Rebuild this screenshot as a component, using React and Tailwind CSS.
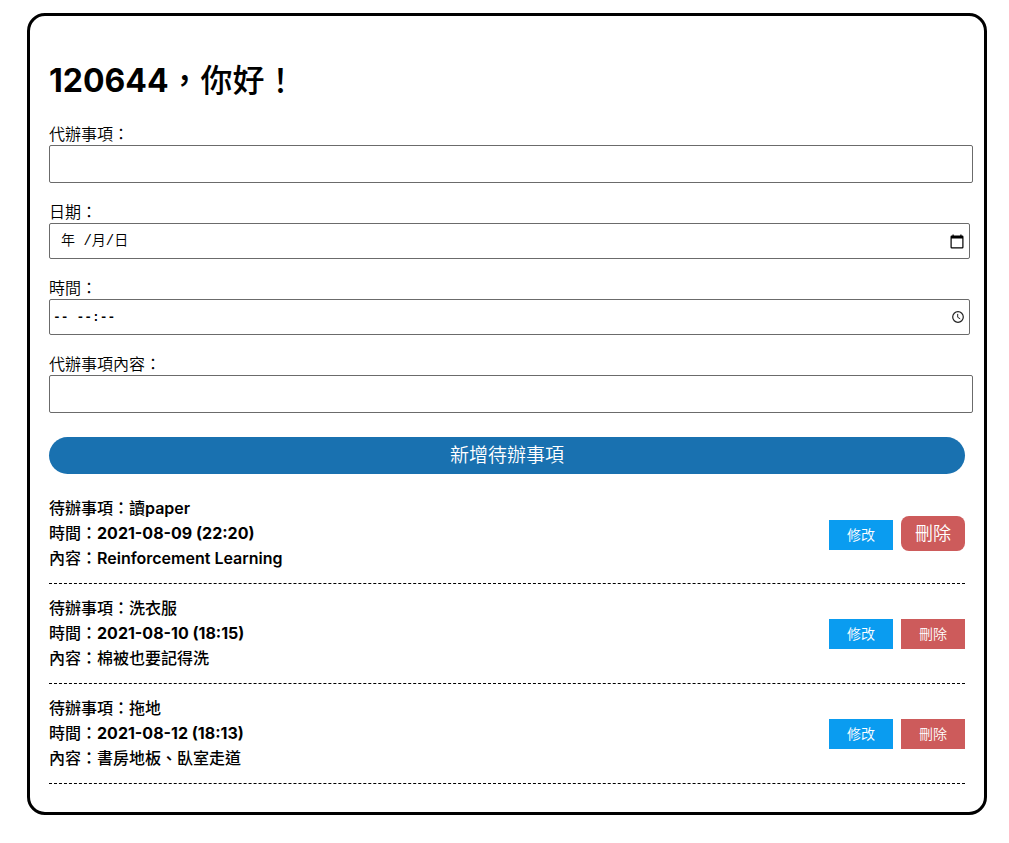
import { useState } from "react";

const initialTodos = [
  { id: 1, title: "讀paper", date: "2021-08-09", time: "22:20", content: "Reinforcement Learning" },
  { id: 2, title: "洗衣服", date: "2021-08-10", time: "18:15", content: "棉被也要記得洗" },
  { id: 3, title: "拖地", date: "2021-08-12", time: "18:13", content: "書房地板、臥室走道" },
];

const inputClass = "block rounded-[2px] border border-[#6b6b6b] bg-white";

function CalendarIcon() {
  return (
    <svg viewBox="0 0 14 15" className="h-[15px] w-[14px]" aria-hidden="true">
      <path
        fill="#000"
        fillRule="evenodd"
        d="M2.5 0.5h1.2v1h6.6v-1h1.2v1h0.7a1.3 1.3 0 0 1 1.3 1.3v10.4a1.3 1.3 0 0 1-1.3 1.3H1.8a1.3 1.3 0 0 1-1.3-1.3V2.8a1.3 1.3 0 0 1 1.3-1.3h0.7zM1.7 4.6v8.7h10.6V4.6z"
      />
    </svg>
  );
}

function ClockIcon() {
  return (
    <svg viewBox="0 0 12 12" className="h-3 w-3" fill="none" stroke="#222" aria-hidden="true">
      <circle cx="6" cy="6" r="5.3" strokeWidth="1.2" />
      <path d="M5.7 2.9v3.4l2.5 1.5" strokeWidth="1" />
    </svg>
  );
}

// Latin runs are set heavier than the Chinese text around them.
function MixedText({ text }) {
  return text.split(/([ -~]+)/).map((part, i) =>
    i % 2 === 1 ? (
      <span key={i} className="font-semibold">
        {part}
      </span>
    ) : (
      part
    )
  );
}

function Field({ id, label, children }) {
  return (
    <div>
      <label htmlFor={id} className="block leading-[22px]">
        {label}
      </label>
      {children}
    </div>
  );
}

function TodoItem({ todo, large, onDelete }) {
  return (
    <li className="flex items-center justify-between border-b border-dashed border-black py-3">
      <div className="font-medium leading-[25px]">
        <p>
          待辦事項：
          <MixedText text={todo.title} />
        </p>
        <p>
          時間：
          <span className="font-bold">
            {todo.date} ({todo.time})
          </span>
        </p>
        <p>
          內容：
          <MixedText text={todo.content} />
        </p>
      </div>
      <div className="flex items-baseline gap-2 text-white">
        <button type="button" className="h-[30px] w-16 bg-[#0a9cf0] text-sm">
          修改
        </button>
        <button
          type="button"
          onClick={onDelete}
          className={
            large
              ? "h-[35px] w-16 rounded-lg bg-[#cd5b5b] text-lg"
              : "h-[30px] w-16 bg-[#cd5b5b] text-sm"
          }
        >
          刪除
        </button>
      </div>
    </li>
  );
}

export default function App() {
  const [todos, setTodos] = useState(initialTodos);

  return (
    <div
      lang="zh-Hant"
      className="bg-white pt-[13px] pr-[22px] pb-7 pl-[27px] font-['Inter','Noto_Sans_CJK_TC',sans-serif] text-base font-[350] text-black"
    >
      <main className="rounded-[18px] border-[3px] border-black px-[19px] pt-[45px] pb-7">
        <h1 className="mb-[22px] text-[32px] leading-10 font-medium">
          <span className="font-bold">120644</span>，你好！
        </h1>
        <form onSubmit={(e) => e.preventDefault()}>
          <div className="flex flex-col gap-[18px]">
            <Field id="title" label="代辦事項：">
              <input id="title" type="text" className={`${inputClass} h-[38px] w-[calc(100%+8px)] px-3`} />
            </Field>
            <Field id="date" label="日期：">
              <div className="relative w-[calc(100%+5px)]">
                <input
                  id="date"
                  type="text"
                  placeholder="年 /月/日"
                  className={`${inputClass} h-9 w-full px-[11px] text-sm placeholder:text-black font-['Liberation_Mono','Noto_Sans_CJK_TC',monospace]`}
                />
                <span className="absolute inset-y-0 right-[6px] flex items-center">
                  <CalendarIcon />
                </span>
              </div>
            </Field>
            <Field id="time" label="時間：">
              <div className="relative w-[calc(100%+5px)]">
                <input
                  id="time"
                  type="text"
                  placeholder="-- --:--"
                  className={`${inputClass} h-9 w-full px-[3px] text-[13px] font-bold placeholder:text-black font-['Liberation_Mono','Noto_Sans_CJK_TC',monospace]`}
                />
                <span className="absolute inset-y-0 right-[6px] flex items-center">
                  <ClockIcon />
                </span>
              </div>
            </Field>
            <Field id="content" label="代辦事項內容：">
              <input id="content" type="text" className={`${inputClass} h-[38px] w-[calc(100%+8px)] px-3`} />
            </Field>
          </div>
          <button
            type="submit"
            className="mt-6 h-[37px] w-full rounded-full bg-[#1971b0] text-[19px] leading-6 text-white"
          >
            新增待辦事項
          </button>
        </form>
        <ul className="mt-[10px]">
          {todos.map((todo) => (
            <TodoItem
              key={todo.id}
              todo={todo}
              large={todo.id === 1}
              onDelete={() => setTodos(todos.filter((t) => t.id !== todo.id))}
            />
          ))}
        </ul>
      </main>
    </div>
  );
}
